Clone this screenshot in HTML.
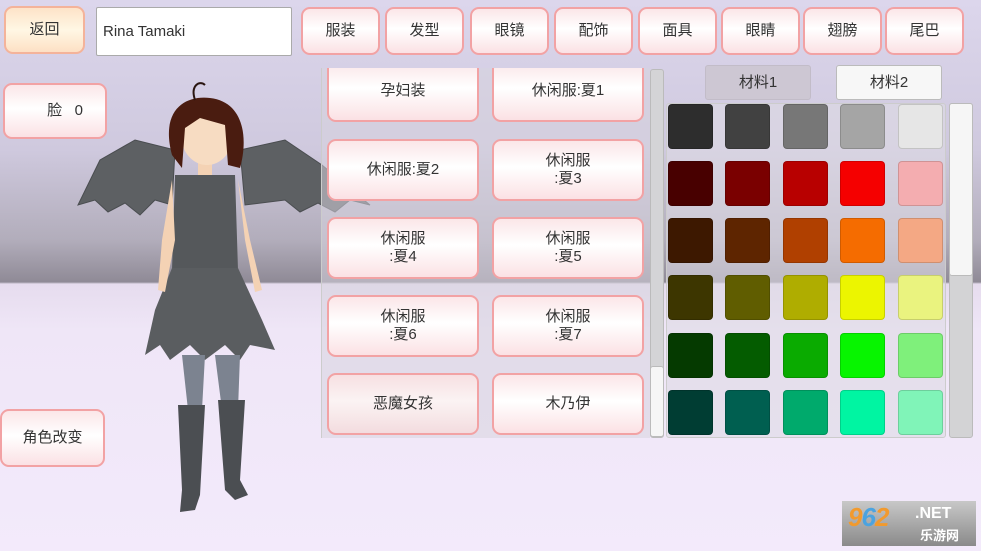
<!DOCTYPE html>
<html><head><meta charset="utf-8"><style>
*{margin:0;padding:0;box-sizing:border-box}
body{width:981px;height:551px;overflow:hidden;position:relative;font-family:"Liberation Sans","Noto Sans CJK SC",sans-serif;color:#333;
background:linear-gradient(180deg,#dcd6ec 0px,#cfc9de 150px,#b2adbb 240px,#8f8a96 282px,#e6dcee 284px,#efe6f7 330px,#f3eafb 551px)}
.a{position:absolute}
.btn{position:absolute;border:2px solid #f2a2a4;border-radius:9px;background:linear-gradient(180deg,#fbe6e8 0%,#ffffff 45%,#fbe1e4 100%);display:flex;align-items:center;justify-content:center;text-align:center;font-size:15px;line-height:18px;color:#333}
.sw{position:absolute;width:45px;height:45px;border-radius:4px;border:1px solid rgba(0,0,0,.15)}
</style></head><body>
<div class="btn" style="left:4px;top:6px;width:81px;height:48px;background:linear-gradient(180deg,#fde3c8,#fff7e4 50%,#fde0c4);border-color:#f4b39a">返回</div>
<div class="a" style="left:96px;top:7px;width:196px;height:49px;background:#fff;border:1px solid #aaa;border-radius:2px;font-size:15px;line-height:47px;padding-left:6px;color:#333">Rina Tamaki</div>
<div class="btn" style="left:301px;top:7px;width:79px;height:48px">服装</div>
<div class="btn" style="left:385px;top:7px;width:79px;height:48px">发型</div>
<div class="btn" style="left:470px;top:7px;width:79px;height:48px">眼镜</div>
<div class="btn" style="left:554px;top:7px;width:79px;height:48px">配饰</div>
<div class="btn" style="left:638px;top:7px;width:79px;height:48px">面具</div>
<div class="btn" style="left:721px;top:7px;width:79px;height:48px">眼睛</div>
<div class="btn" style="left:803px;top:7px;width:79px;height:48px">翅膀</div>
<div class="btn" style="left:885px;top:7px;width:79px;height:48px">尾巴</div>
<div class="btn" style="left:3px;top:83px;width:104px;height:56px;padding-left:20px">脸&nbsp;&nbsp;&nbsp;0</div>
<div class="btn" style="left:0px;top:409px;width:105px;height:58px">角色改变</div>

<svg class="a" style="left:60px;top:75px" width="320" height="450" viewBox="60 75 320 450">
<g fill="#5d6063" stroke="#4a4d50" stroke-width="1">
<path d="M175 150 L135 140 L100 160 L78 205 L95 200 L108 212 L125 203 L140 215 L155 200 L172 205 Z"/>
<path d="M240 150 L285 140 L322 165 L370 205 L350 200 L335 212 L318 203 L300 212 L285 200 L245 205 Z"/>
</g>
<path d="M175 175 L235 175 L238 270 L172 270 Z" fill="#55585b"/>
<path d="M172 268 L238 268 L262 320 L275 350 L250 345 L240 360 L225 345 L205 360 L190 345 L170 360 L160 345 L145 355 L155 310 Z" fill="#5a5d60"/>
<path d="M172 180 L162 240 L158 290 L165 292 L175 240 Z M238 180 L250 240 L262 290 L255 292 L245 240 Z" fill="#f4d2b4"/>
<path d="M182 355 L205 355 L202 410 L188 410 Z M215 355 L240 355 L238 410 L222 410 Z" fill="#7c8390"/>
<path d="M178 405 L205 405 L200 495 L195 510 L180 512 L182 490 Z M218 400 L245 400 L240 480 L248 495 L235 500 L225 490 Z" fill="#4b4e52"/>
<rect x="198" y="160" width="14" height="15" fill="#f4d2b4"/>
<ellipse cx="207" cy="135" rx="26" ry="30" fill="#f7dcc2"/>
<path d="M172 155 C160 110 185 95 210 98 C245 102 248 140 240 168 L228 165 L225 125 L200 118 L185 128 L182 168 Z" fill="#4a1c10"/>
<path d="M195 100 C190 85 200 80 205 85" stroke="#2a1510" stroke-width="2" fill="none"/>
</svg>

<div class="a" style="left:321px;top:68px;width:329px;height:370px;background:rgba(215,212,222,.55);border-left:1px solid #ccc;overflow:hidden">
<div class="btn" style="left:5px;top:-8px;width:152px;height:62px">孕妇装</div>
<div class="btn" style="left:170px;top:-8px;width:152px;height:62px">休闲服:夏1</div>
<div class="btn" style="left:5px;top:71px;width:152px;height:62px">休闲服:夏2</div>
<div class="btn" style="left:170px;top:71px;width:152px;height:62px">休闲服<br>:夏3</div>
<div class="btn" style="left:5px;top:149px;width:152px;height:62px">休闲服<br>:夏4</div>
<div class="btn" style="left:170px;top:149px;width:152px;height:62px">休闲服<br>:夏5</div>
<div class="btn" style="left:5px;top:227px;width:152px;height:62px">休闲服<br>:夏6</div>
<div class="btn" style="left:170px;top:227px;width:152px;height:62px">休闲服<br>:夏7</div>
<div class="btn" style="left:5px;top:305px;width:152px;height:62px;background:linear-gradient(180deg,#f7e0e2,#fbf3f3 45%,#f3dcdf)">恶魔女孩</div>
<div class="btn" style="left:170px;top:305px;width:152px;height:62px">木乃伊</div>
</div>
<div class="a" style="left:650px;top:69px;width:14px;height:369px;background:#d4d4d6;border:1px solid #bbb;border-radius:3px"></div>
<div class="a" style="left:650px;top:366px;width:14px;height:71px;background:#f6f6f6;border:1px solid #bbb;border-radius:3px"></div>

<div class="a" style="left:705px;top:65px;width:106px;height:35px;background:#cdc7d3;border:1px solid #c2bcc8;border-radius:3px;text-align:center;line-height:33px;font-size:15px">材料1</div>
<div class="a" style="left:836px;top:65px;width:106px;height:35px;background:#f7f7f7;border:1px solid #bbb;border-radius:3px;text-align:center;line-height:33px;font-size:15px">材料2</div>
<div class="a" style="left:666px;top:103px;width:280px;height:335px;background:rgba(222,218,228,.6);border:1px solid #ccc;border-radius:3px"></div>
<div class="a" style="left:949px;top:103px;width:24px;height:335px;background:#d3d3d5;border:1px solid #bbb;border-radius:3px"></div>
<div class="a" style="left:949px;top:103px;width:24px;height:173px;background:#f6f6f6;border:1px solid #bbb;border-radius:3px"></div>

<div class="sw" style="left:668px;top:104px;background:#2d2d2d"></div>
<div class="sw" style="left:725px;top:104px;background:#414141"></div>
<div class="sw" style="left:783px;top:104px;background:#777"></div>
<div class="sw" style="left:840px;top:104px;background:#a5a5a5"></div>
<div class="sw" style="left:898px;top:104px;background:#e6e6e6"></div>
<div class="sw" style="left:668px;top:161px;background:#480000"></div>
<div class="sw" style="left:725px;top:161px;background:#7a0000"></div>
<div class="sw" style="left:783px;top:161px;background:#b80000"></div>
<div class="sw" style="left:840px;top:161px;background:#f50000"></div>
<div class="sw" style="left:898px;top:161px;background:#f4adb0"></div>
<div class="sw" style="left:668px;top:218px;background:#3d1800"></div>
<div class="sw" style="left:725px;top:218px;background:#5e2500"></div>
<div class="sw" style="left:783px;top:218px;background:#b04000"></div>
<div class="sw" style="left:840px;top:218px;background:#f56c00"></div>
<div class="sw" style="left:898px;top:218px;background:#f4a884"></div>
<div class="sw" style="left:668px;top:275px;background:#3d3600"></div>
<div class="sw" style="left:725px;top:275px;background:#605d00"></div>
<div class="sw" style="left:783px;top:275px;background:#afad00"></div>
<div class="sw" style="left:840px;top:275px;background:#ecf500"></div>
<div class="sw" style="left:898px;top:275px;background:#eaf37f"></div>
<div class="sw" style="left:668px;top:333px;background:#053a00"></div>
<div class="sw" style="left:725px;top:333px;background:#045c00"></div>
<div class="sw" style="left:783px;top:333px;background:#0aab00"></div>
<div class="sw" style="left:840px;top:333px;background:#07f500"></div>
<div class="sw" style="left:898px;top:333px;background:#7ff07b"></div>
<div class="sw" style="left:668px;top:390px;background:#003d33"></div>
<div class="sw" style="left:725px;top:390px;background:#005f50"></div>
<div class="sw" style="left:783px;top:390px;background:#00aa6c"></div>
<div class="sw" style="left:840px;top:390px;background:#00f5a2"></div>
<div class="sw" style="left:898px;top:390px;background:#80f4b8"></div>

<div class="a" style="left:842px;top:501px;width:134px;height:45px;background:linear-gradient(180deg,#c8c8c8,#8a8a8a);"></div>
<div class="a" style="left:848px;top:502px;font-size:26px;font-weight:bold;font-style:italic;color:#f29a2e;letter-spacing:-1px">9<span style="color:#4ba3e0">6</span>2</div>
<div class="a" style="left:915px;top:505px;font-size:16px;font-weight:bold;color:#fff">.NET</div>
<div class="a" style="left:920px;top:525px;font-size:13px;font-weight:bold;color:#fff">乐游网</div>
</body></html>
